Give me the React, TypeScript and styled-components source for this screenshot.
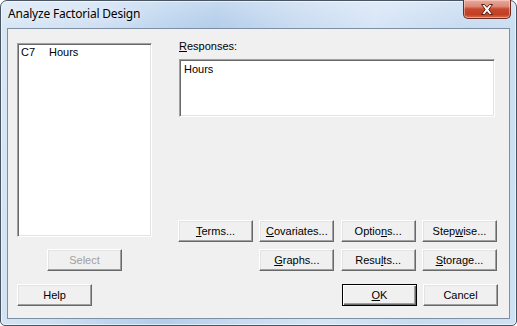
import React from "react";
import styled, { createGlobalStyle, css } from "styled-components";

const GlobalStyle = createGlobalStyle`
  html, body {
    margin: 0;
    padding: 0;
    background: #ffffff;
  }
  * {
    box-sizing: border-box;
  }
`;

const Window = styled.div`
  width: 517px;
  height: 326px;
  display: flex;
  flex-direction: column;
  padding: 0 6px 6px 6px;
  border: 1px solid #4a5563;
  border-radius: 7px 7px 5px 5px;
  background:
    linear-gradient(180deg, rgba(255, 255, 255, 0.25) 0px, rgba(255, 255, 255, 0) 28px),
    linear-gradient(
      100deg,
      #d9e7f5 0%,
      #cfe0f3 18%,
      #bcd4ee 30%,
      #b3cdea 38%,
      #c8dbf1 52%,
      #d6e5f6 66%,
      #c7dbf1 82%,
      #cfe1f4 100%
    );
  box-shadow: inset 0 0 0 1px rgba(255, 255, 255, 0.55);
  font-family: "Liberation Sans", Arial, sans-serif;
  font-size: 11px;
  color: #000;
`;

const TitleBar = styled.div`
  height: 27px;
  display: flex;
  justify-content: space-between;
  align-items: flex-start;
  margin-right: -1px;
`;

const Title = styled.span`
  margin: 5px 0 0 1px;
  font-family: "Noto Sans", "Open Sans", sans-serif;
  font-size: 12px;
  line-height: 16px;
  letter-spacing: -0.2px;
  color: #000;
  text-shadow: 0 0 6px rgba(255, 255, 255, 0.9);
`;

const CloseButton = styled.div`
  width: 48px;
  height: 19px;
  margin-top: -1px;
  display: flex;
  align-items: center;
  justify-content: center;
  border: 1px solid #6b2b20;
  border-top: none;
  border-radius: 0 0 5px 5px;
  background: linear-gradient(
    180deg,
    #e9a99b 0%,
    #dd8a78 35%,
    #c9482e 50%,
    #c13e22 80%,
    #d5714f 100%
  );
  box-shadow: inset 0 0 0 1px rgba(255, 230, 220, 0.45);
`;

const Client = styled.div`
  flex: 1;
  display: flex;
  flex-direction: column;
  padding: 14px 11px 11px 9px;
  border: 1px solid #7f8fa3;
  background: #f0f0f0;
`;

const Main = styled.div`
  display: flex;
  gap: 26px;
`;

const LeftColumn = styled.div`
  width: 135px;
  display: flex;
  flex-direction: column;
  align-items: center;
  gap: 12px;
`;

const sunken = css`
  border: 1px solid;
  border-color: #a0a0a0 #ffffff #ffffff #a0a0a0;
  box-shadow: inset 1px 1px 0 #696969, inset -1px -1px 0 #e3e3e3;
  background: #ffffff;
`;

const ListBox = styled.div`
  ${sunken};
  width: 135px;
  height: 194px;
  padding: 2px 2px 0 3px;
`;

const ListRow = styled.div`
  display: grid;
  grid-template-columns: 28px 1fr;
  line-height: 13px;
`;

const RightColumn = styled.div`
  width: 319px;
  display: flex;
  flex-direction: column;
`;

const Label = styled.div`
  margin: -3px 0 0 1px;
  line-height: 13px;
`;

const ResponsesBox = styled.div`
  ${sunken};
  width: 316px;
  height: 58px;
  margin: 6px 0 0 1px;
  padding: 3px 4px;
  line-height: 13px;
`;

const ButtonGrid = styled.div`
  margin-top: auto;
  display: grid;
  grid-template-columns: repeat(4, 75px);
  justify-content: space-between;
  row-gap: 7px;
`;

const Button = styled.div<{ $col?: number; $disabled?: boolean; $default?: boolean }>`
  width: 75px;
  height: 22px;
  display: flex;
  align-items: center;
  justify-content: center;
  line-height: 13px;
  background: #f0f0f0;
  border: 1px solid;
  border-color: #ffffff #696969 #696969 #ffffff;
  box-shadow: inset -1px -1px 0 #a0a0a0, inset 1px 1px 0 #e3e3e3;
  color: ${(p) => (p.$disabled ? "#a0a0a0" : "#000000")};
  ${(p) => p.$col && `grid-column: ${p.$col};`}
  ${(p) =>
    p.$default &&
    css`
      border-color: #000000;
      box-shadow: inset 1px 1px 0 #ffffff, inset -1px -1px 0 #696969,
        inset -2px -2px 0 #a0a0a0;
    `}
`;

const Key = styled.span`
  text-decoration: underline;
  text-underline-offset: 1px;
`;

const Footer = styled.div`
  margin-top: 13px;
  display: flex;
  gap: 6px;
`;

const Spacer = styled.div`
  flex: 1;
`;

const CloseGlyph = () => (
  <svg width="14" height="11" viewBox="0 0 14 11">
    <path
      d="M1.5 0.5 L4.5 0.5 L7 3.3 L9.5 0.5 L12.5 0.5 L8.8 5.5 L12.5 10.5 L9.5 10.5 L7 7.7 L4.5 10.5 L1.5 10.5 L5.2 5.5 Z"
      fill="#ffffff"
      stroke="#5a1f14"
      strokeWidth="1"
      strokeLinejoin="round"
    />
  </svg>
);

const App: React.FC = () => {
  return (
    <>
      <GlobalStyle />
      <Window>
        <TitleBar>
          <Title>Analyze Factorial Design</Title>
          <CloseButton>
            <CloseGlyph />
          </CloseButton>
        </TitleBar>
        <Client>
          <Main>
            <LeftColumn>
              <ListBox>
                <ListRow>
                  <span>C7</span>
                  <span>Hours</span>
                </ListRow>
              </ListBox>
              <Button $disabled>Select</Button>
            </LeftColumn>
            <RightColumn>
              <Label>
                <Key>R</Key>esponses:
              </Label>
              <ResponsesBox>Hours</ResponsesBox>
              <ButtonGrid>
                <Button>
                  <span>
                    <Key>T</Key>erms...
                  </span>
                </Button>
                <Button>
                  <span>
                    <Key>C</Key>ovariates...
                  </span>
                </Button>
                <Button>
                  <span>
                    Optio<Key>n</Key>s...
                  </span>
                </Button>
                <Button>
                  <span>
                    Step<Key>w</Key>ise...
                  </span>
                </Button>
                <Button $col={2}>
                  <span>
                    <Key>G</Key>raphs...
                  </span>
                </Button>
                <Button $col={3}>
                  <span>
                    Resu<Key>l</Key>ts...
                  </span>
                </Button>
                <Button $col={4}>
                  <span>
                    <Key>S</Key>torage...
                  </span>
                </Button>
              </ButtonGrid>
            </RightColumn>
          </Main>
          <Footer>
            <Button>Help</Button>
            <Spacer />
            <Button $default>
              <span>
                <Key>O</Key>K
              </span>
            </Button>
            <Button>Cancel</Button>
          </Footer>
        </Client>
      </Window>
    </>
  );
};

export default App;
